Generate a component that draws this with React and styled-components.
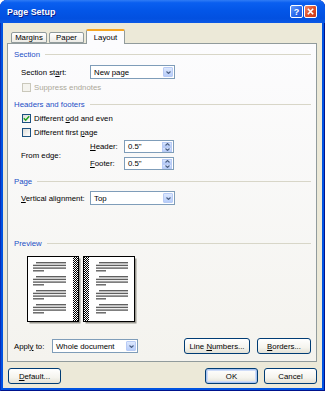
import React from "react";
import styled, { createGlobalStyle } from "styled-components";

const Global = createGlobalStyle`
  html, body { margin: 0; padding: 0; background: #fff; }
  body {
    font-family: "Liberation Sans", Arial, sans-serif;
    font-size: 7.8px;
    color: #000;
  }
`;

const Window = styled.div`
  width: 325px;
  height: 391px;
  box-sizing: border-box;
  border-radius: 7px 7px 0 0;
  background: #0053e1;
  display: flex;
  flex-direction: column;
  overflow: hidden;
  box-shadow: inset 1px 0 #0a2fb8, inset -1px 0 #00138c, inset 0 -1px #00138c;
`;

const TitleBar = styled.div`
  height: 23px;
  flex: none;
  display: flex;
  align-items: center;
  padding: 0 8px 0 7px;
  background: linear-gradient(to bottom, #2f7cf5 0%, #0a5ff0 12%, #0356e8 45%, #0250e0 80%, #0a59e6 100%);
`;

const Title = styled.div`
  color: #fff;
  font-weight: bold;
  font-size: 8.9px;
  text-shadow: 1px 1px #0a1e8c;
  flex: 1;
`;

const CapButton = styled.div`
  width: 13px;
  height: 13px;
  box-sizing: border-box;
  border: 1px solid #fff;
  border-radius: 2px;
  margin-left: 1px;
  display: flex;
  align-items: center;
  justify-content: center;
  color: #fff;
  font-weight: bold;
  font-size: 9px;
  background: ${p => (p.$close
    ? "linear-gradient(135deg, #f08a6a 0%, #e0502a 50%, #c8381a 100%)"
    : "linear-gradient(135deg, #6a9cf8 0%, #2d6ef0 50%, #1d55d8 100%)")};
`;

const Body = styled.div`
  flex: 1;
  margin: 0 3px 3px;
  background: #ece9d8;
  padding: 5px 5px 0 4px;
  display: flex;
  flex-direction: column;
`;

const TabStrip = styled.div`
  display: flex;
  align-items: flex-end;
  height: 15px;
  padding-left: 4px;
  gap: 2px;
`;

const Tab = styled.div`
  width: ${p => p.$w}px;
  height: ${p => (p.$active ? 15 : 11)}px;
  box-sizing: border-box;
  border: 1px solid #919b9c;
  border-bottom: ${p => (p.$active ? "none" : "1px solid #919b9c")};
  border-top: ${p => (p.$active ? "2px solid #f5a623" : "1px solid #919b9c")};
  border-radius: 2px 2px 0 0;
  background: ${p => (p.$active ? "#fcfcfe" : "linear-gradient(to bottom, #fff, #ecebe6)")};
  display: flex;
  align-items: center;
  justify-content: center;
  margin-bottom: ${p => (p.$active ? "-1px" : "0")};
  position: relative;
  z-index: ${p => (p.$active ? 1 : 0)};
`;

const Panel = styled.div`
  height: 319px;
  box-sizing: border-box;
  border: 1px solid #919b9c;
  background: linear-gradient(to bottom, #fcfcfe, #f4f3ee);
  padding: 4px 5px 0 6px;
  display: flex;
  flex-direction: column;
`;

const GroupHead = styled.div`
  height: 12px;
  margin-top: ${p => p.$mt || 0}px;
  display: flex;
  align-items: center;
  gap: 5px;
  color: #1c4fc6;
  &::after {
    content: "";
    flex: 1;
    height: 1px;
    background: #d8d6c8;
  }
`;

const Row = styled.div`
  height: ${p => p.$h}px;
  margin-top: ${p => p.$mt}px;
  padding-left: ${p => p.$indent || 0}px;
  display: flex;
  align-items: center;
`;

const Label = styled.span`
  width: ${p => p.$w}px;
  flex: none;
  white-space: nowrap;
`;

const SelectBox = styled.div`
  width: ${p => p.$w}px;
  height: ${p => p.$h || 14}px;
  box-sizing: border-box;
  border: 1px solid #7f9db9;
  background: #fff;
  display: flex;
  align-items: center;
  padding: 1px 1px 1px 3px;
`;

const SelectText = styled.span`
  flex: 1;
  white-space: nowrap;
`;

const DropBtn = styled.div`
  width: 10px;
  align-self: stretch;
  border: 1px solid #b8cbf5;
  box-sizing: border-box;
  border-radius: 1px;
  background: linear-gradient(to bottom, #dde8fe, #b7cdfa);
  display: flex;
  align-items: center;
  justify-content: center;
`;

const SpinCol = styled.div`
  width: 10px;
  align-self: stretch;
  display: flex;
  flex-direction: column;
`;

const SpinHalf = styled.div`
  flex: 1;
  border: 1px solid #b8cbf5;
  box-sizing: border-box;
  background: linear-gradient(to bottom, #dde8fe, #b7cdfa);
  display: flex;
  align-items: center;
  justify-content: center;
`;

const Box = styled.span`
  width: 9px;
  height: 9px;
  box-sizing: border-box;
  flex: none;
  border: 1px solid ${p => (p.$disabled ? "#cac8bb" : "#1c5180")};
  background: ${p => (p.$disabled ? "#f4f3ee" : "linear-gradient(135deg, #dcdcd7, #fff)")};
  display: flex;
  align-items: center;
  justify-content: center;
  margin-right: 3px;
`;

const CheckText = styled.span`
  color: ${p => (p.$disabled ? "#aca899" : "#000")};
`;

const EdgeBlock = styled.div`
  height: 30px;
  margin-top: 3px;
  padding-left: 7px;
  display: flex;
  align-items: center;
`;

const EdgeFields = styled.div`
  display: flex;
  flex-direction: column;
  gap: 4px;
`;

const BookWrap = styled.div`
  margin: 7px 0 0 13px;
  height: 66px;
`;

const Spacer = styled.div`
  flex: 1;
`;

const Btn = styled.div`
  width: ${p => p.$w}px;
  height: ${p => p.$h || 16}px;
  box-sizing: border-box;
  border: 1px solid #003c74;
  border-radius: 3px;
  background: linear-gradient(to bottom, #fff 0%, #f5f4ee 60%, #e3e1d6 100%);
  display: flex;
  align-items: center;
  justify-content: center;
  white-space: pre;
  margin-left: ${p => p.$ml || 0}px;
  box-shadow: ${p => (p.$default ? "inset 0 0 0 1px #a8c4f0, inset 0 0 0 2px #cfdcf8" : "none")};
`;

const Footer = styled.div`
  display: flex;
  align-items: center;
  margin-top: 6px;
  padding: 0 0 0 1px;
`;

const Chevron = ({ up }) => (
  <svg width="5" height="3" viewBox="0 0 5 3">
    <path d={up ? "M0.5 2.5 L2.5 0.5 L4.5 2.5" : "M0.5 0.5 L2.5 2.5 L4.5 0.5"} fill="none" stroke="#4d6185" strokeWidth="1.1" />
  </svg>
);

const Select = ({ w, children }) => (
  <SelectBox $w={w}>
    <SelectText>{children}</SelectText>
    <DropBtn><Chevron /></DropBtn>
  </SelectBox>
);

const Spin = ({ value }) => (
  <SelectBox $w={50} $h={13}>
    <SelectText>{value}</SelectText>
    <SpinCol>
      <SpinHalf><Chevron up /></SpinHalf>
      <SpinHalf><Chevron /></SpinHalf>
    </SpinCol>
  </SelectBox>
);

const Check = ({ checked, disabled, children }) => (
  <>
    <Box $disabled={disabled}>
      {checked && (
        <svg width="7" height="7" viewBox="0 0 7 7">
          <path d="M0.8 3.2 L2.7 5.2 L6.2 1.2" fill="none" stroke="#21a121" strokeWidth="1.5" />
        </svg>
      )}
    </Box>
    <CheckText $disabled={disabled}>{children}</CheckText>
  </>
);

const pageLines = (x0, xi, x1, xs) => {
  const out = [];
  [6, 20, 34, 48].forEach(g => {
    out.push([xi, x1, g]);
    out.push([x0, x1, g + 2.7]);
    out.push([x0, x1, g + 5.4]);
    out.push([x0, xs, g + 8.1]);
  });
  return out;
};

const Book = () => (
  <svg width="114" height="69" viewBox="0 0 114 69">
    <defs>
      <pattern id="chk" width="2" height="2" patternUnits="userSpaceOnUse">
        <rect width="2" height="2" fill="#fff" />
        <rect width="1" height="1" fill="#000" />
        <rect x="1" y="1" width="1" height="1" fill="#000" />
      </pattern>
    </defs>
    <rect x="2.5" y="2.5" width="51" height="65" fill="#9a9890" />
    <rect x="58.5" y="2.5" width="51" height="65" fill="#9a9890" />
    <rect x="0.5" y="0.5" width="51" height="65" fill="#fff" stroke="#000" />
    <rect x="46" y="1" width="5" height="64" fill="url(#chk)" />
    <rect x="56.5" y="0.5" width="51" height="65" fill="#fff" stroke="#000" />
    <rect x="57" y="1" width="5" height="64" fill="url(#chk)" />
    {pageLines(6, 9, 39, 17).map(([a, b, y], i) => (
      <rect key={"l" + i} x={a} y={y} width={b - a} height="1.4" fill="#606060" />
    ))}
    {pageLines(69, 72, 101, 79).map(([a, b, y], i) => (
      <rect key={"r" + i} x={a} y={y} width={b - a} height="1.4" fill="#606060" />
    ))}
  </svg>
);

export default function App() {
  return (
    <>
      <Global />
      <Window>
        <TitleBar>
          <Title>Page Setup</Title>
          <CapButton>?</CapButton>
          <CapButton $close>
            <svg width="7" height="7" viewBox="0 0 7 7">
              <path d="M0.8 0.8 L6.2 6.2 M6.2 0.8 L0.8 6.2" stroke="#fff" strokeWidth="1.6" />
            </svg>
          </CapButton>
        </TitleBar>
        <Body>
          <TabStrip>
            <Tab $w={36}>Margins</Tab>
            <Tab $w={35}>Paper</Tab>
            <Tab $w={39} $active>Layout</Tab>
          </TabStrip>
          <Panel>
            <GroupHead>Section</GroupHead>
            <Row $h={14} $mt={5} $indent={7}>
              <Label $w={69}>Section st<u>a</u>rt:</Label>
              <Select w={85}>New page</Select>
            </Row>
            <Row $h={10} $mt={3} $indent={8}>
              <Check disabled>Suppress endnotes</Check>
            </Row>
            <GroupHead $mt={6}>Headers and footers</GroupHead>
            <Row $h={10} $mt={3} $indent={8}>
              <Check checked>Different <u>o</u>dd and even</Check>
            </Row>
            <Row $h={10} $mt={4} $indent={8}>
              <Check>Different first <u>p</u>age</Check>
            </Row>
            <EdgeBlock>
              <Label $w={69}>From edge:</Label>
              <EdgeFields>
                <Row $h={13} $mt={0}>
                  <Label $w={34}><u>H</u>eader:</Label>
                  <Spin value={'0.5"'} />
                </Row>
                <Row $h={13} $mt={0}>
                  <Label $w={34}><u>F</u>ooter:</Label>
                  <Spin value={'0.5"'} />
                </Row>
              </EdgeFields>
            </EdgeBlock>
            <GroupHead $mt={5}>Page</GroupHead>
            <Row $h={14} $mt={4} $indent={7}>
              <Label $w={69}><u>V</u>ertical alignment:</Label>
              <Select w={85}>Top</Select>
            </Row>
            <GroupHead $mt={32}>Preview</GroupHead>
            <BookWrap><Book /></BookWrap>
            <Row $h={16} $mt={16}>
              <Label $w={38}>Appl<u>y</u> to:</Label>
              <Select w={86}>Whole document</Select>
              <Spacer />
              <Btn $w={66}><span>Line <u>N</u>umbers...</span></Btn>
              <Btn $w={54} $ml={7}><span><u>B</u>orders...</span></Btn>
            </Row>
          </Panel>
          <Footer>
            <Btn $w={53}><span><u>D</u>efault...</span></Btn>
            <Spacer />
            <Btn $w={53} $default>OK</Btn>
            <Btn $w={53} $ml={6}>Cancel</Btn>
          </Footer>
        </Body>
      </Window>
    </>
  );
}
